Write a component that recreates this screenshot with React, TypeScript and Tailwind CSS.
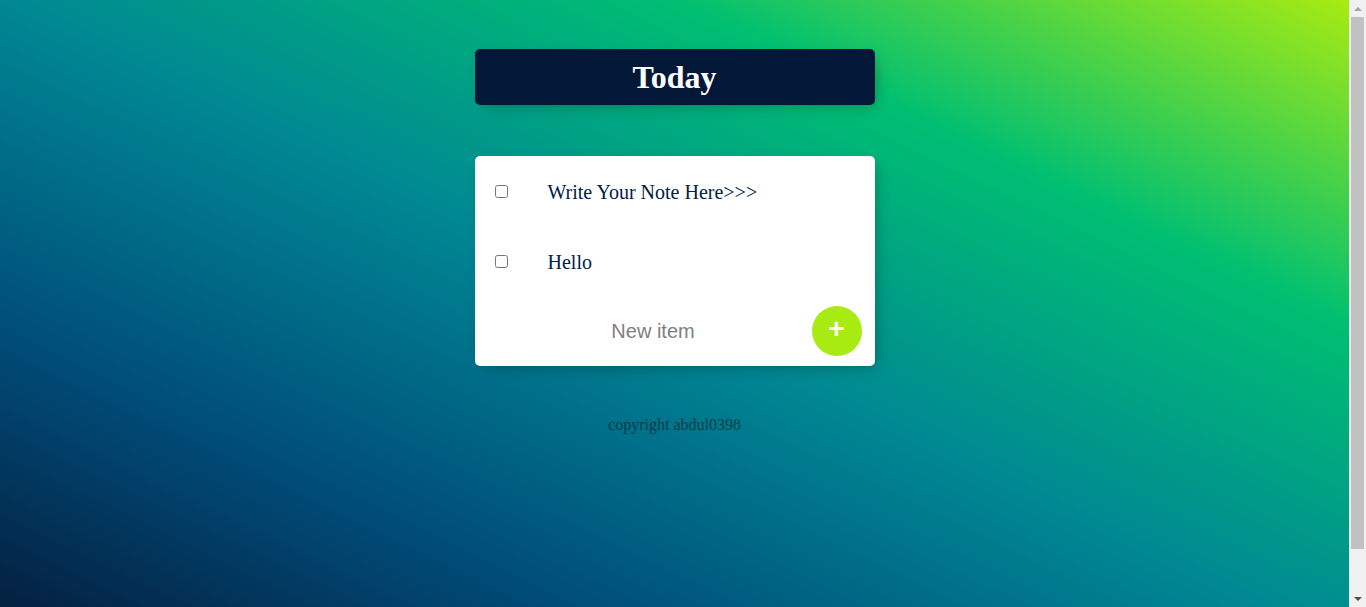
import React from "react";

export default function App() {
  const items = ["Write Your Note Here>>>", "Hello"];
  return (
    <div className="flex h-[607px] w-full overflow-hidden">
      <div className="flex-1 h-[607px] overflow-hidden">
        <div
          className="min-h-[652px] w-full bg-[linear-gradient(to_right_top,#051937,#004d7a,#008793,#00bf72,#a8eb12)] pt-[49px]"
          style={{ fontFamily: '"Liberation Serif", "Times New Roman", serif' }}
        >
          <div className="mx-auto w-[400px] h-[56px] rounded-[5px] bg-[#031838] shadow-[5px_5px_15px_-5px_rgba(0,0,0,0.3)] flex items-center justify-center">
            <h1 className="text-[32px] font-bold text-white leading-[37px]">Today</h1>
          </div>

          <div className="mx-auto mt-[51px] w-[400px] rounded-[5px] bg-white shadow-[5px_5px_15px_-5px_rgba(0,0,0,0.3)]">
            {items.map((t) => (
              <div key={t} className="h-[70px] flex items-center">
                <input type="checkbox" className="ml-[20px] mr-[20px] w-[13px] h-[13px] m-0 mt-[1px]" />
                <p className="px-[20px] text-[20px] text-[#00204a] leading-[23px] pt-[2px]">{t}</p>
              </div>
            ))}
            <div className="h-[70px] flex items-center">
              <input
                type="text"
                placeholder="New item"
                className="ml-[22px] w-[313px] h-[60px] text-center text-[20px] outline-none placeholder:text-[#808080] placeholder:opacity-100"
                style={{ fontFamily: '"Liberation Sans", Arial, sans-serif' }}
              />
              <button
                className="ml-[2px] w-[50px] h-[50px] rounded-full bg-[#a8eb12] text-white text-[28px] font-bold pb-[4px] flex items-center justify-center leading-none"
                style={{ fontFamily: '"Liberation Sans", Arial, sans-serif' }}
              >
                +
              </button>
            </div>
          </div>

          <footer className="mt-[50px] text-center text-[16px] text-black/50 leading-[18px]">
            copyright abdul0398
          </footer>
        </div>
      </div>

      <div className="w-[17px] h-[607px] bg-[#f1f1f1] flex flex-col items-center">
        <div className="h-[17px] w-full flex items-center justify-center">
          <div className="w-0 h-0 border-l-[4px] border-r-[4px] border-b-[4px] border-l-transparent border-r-transparent border-b-[#a3a3a3]" />
        </div>
        <div className="w-[13px] h-[532px] bg-[#c1c1c1]" />
        <div className="flex-1" />
        <div className="h-[17px] w-full flex items-center justify-center">
          <div className="w-0 h-0 border-l-[4px] border-r-[4px] border-t-[4px] border-l-transparent border-r-transparent border-t-[#505050]" />
        </div>
      </div>
    </div>
  );
}
